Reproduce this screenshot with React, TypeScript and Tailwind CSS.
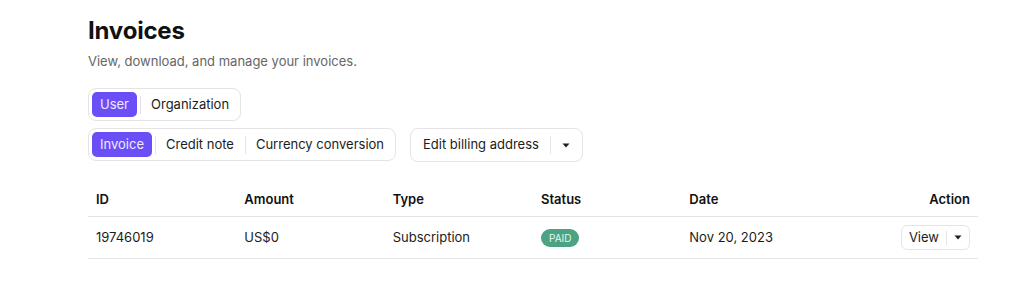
import React from "react";

const Caret = () => (
  <svg width="8" height="5" viewBox="0 0 8 5" className="block">
    <path d="M0.5 0.5 L7.5 0.5 L4 4.5 Z" fill="#1f1f1f" />
  </svg>
);

function Segmented({ items, active }: { items: string[]; active: number }) {
  return (
    <div className="inline-flex items-center self-start rounded-[8px] border border-[#e4e4e7] bg-white p-[3px]">
      {items.map((it, i) => (
        <React.Fragment key={it}>
          {i > 0 && <div className="ml-[3px] mr-[2px] h-[18px] w-px bg-[#e4e4e7]" />}
          <div
            className={
              i === active
                ? "flex h-[25px] items-center rounded-[5px] bg-[#6b4ef6] px-[8px] text-[13px] text-[#efeafe]"
                : "flex h-[25px] items-center px-[8px] text-[13px] text-[#1c1c1c]"
            }
          >
            {it}
          </div>
        </React.Fragment>
      ))}
    </div>
  );
}

export default function App() {
  return (
    <div
      className="min-h-[289px] w-[1024px] bg-white text-[#1c1c1c]"
      style={{ fontFamily: "Inter, 'Noto Sans', sans-serif" }}
    >
      <div className="flex w-[978px] flex-col pl-[88px] pt-[15px]">
        <h1 className="text-[24px] font-bold leading-[32px] tracking-[-0.2px] text-[#111]">Invoices</h1>
        <p className="mt-[6px] text-[13px] leading-[16px] text-[#666]">
          View, download, and manage your invoices.
        </p>
        <div className="mt-[19px] flex">
          <Segmented items={["User", "Organization"]} active={0} />
        </div>
        <div className="mt-[7px] flex items-start gap-[14px]">
          <Segmented items={["Invoice", "Credit note", "Currency conversion"]} active={0} />
          <div className="flex h-[34px] items-center rounded-[8px] border border-[#e4e4e7] bg-white">
            <span className="pl-[12px] pr-[11px] text-[13px]">Edit billing address</span>
            <div className="h-[18px] w-px bg-[#e4e4e7]" />
            <span className="flex w-[31px] justify-center">
              <Caret />
            </span>
          </div>
        </div>
        <div className="mt-[22px] w-[890px]">
          <div className="grid h-[33px] grid-cols-6 items-center border-b border-[#e4e4e7] text-[13px] font-semibold text-[#111]">
            <div className="px-[8px]">ID</div>
            <div className="px-[8px]">Amount</div>
            <div className="px-[8px]">Type</div>
            <div className="px-[8px]">Status</div>
            <div className="px-[8px]">Date</div>
            <div className="px-[8px] text-right">Action</div>
          </div>
          <div className="grid h-[42px] grid-cols-6 items-center border-b border-[#e4e4e7] text-[13px] text-[#1c1c1c]">
            <div className="px-[8px]">19746019</div>
            <div className="px-[8px]">US$0</div>
            <div className="px-[8px]">Subscription</div>
            <div className="px-[8px]">
              <span className="inline-flex h-[18px] items-center rounded-full bg-[#4aa383] px-[8px] text-[10px] text-[#e8f5ef]">
                PAID
              </span>
            </div>
            <div className="px-[8px]">Nov 20, 2023</div>
            <div className="flex justify-end px-[8px]">
              <div className="flex h-[25px] items-center rounded-[6px] border border-[#e4e4e7] bg-white">
                <span className="pl-[7px] pr-[7px] text-[13px]">View</span>
                <div className="h-[14px] w-px bg-[#e4e4e7]" />
                <span className="flex w-[22px] justify-center">
                  <Caret />
                </span>
              </div>
            </div>
          </div>
        </div>
      </div>
    </div>
  );
}
